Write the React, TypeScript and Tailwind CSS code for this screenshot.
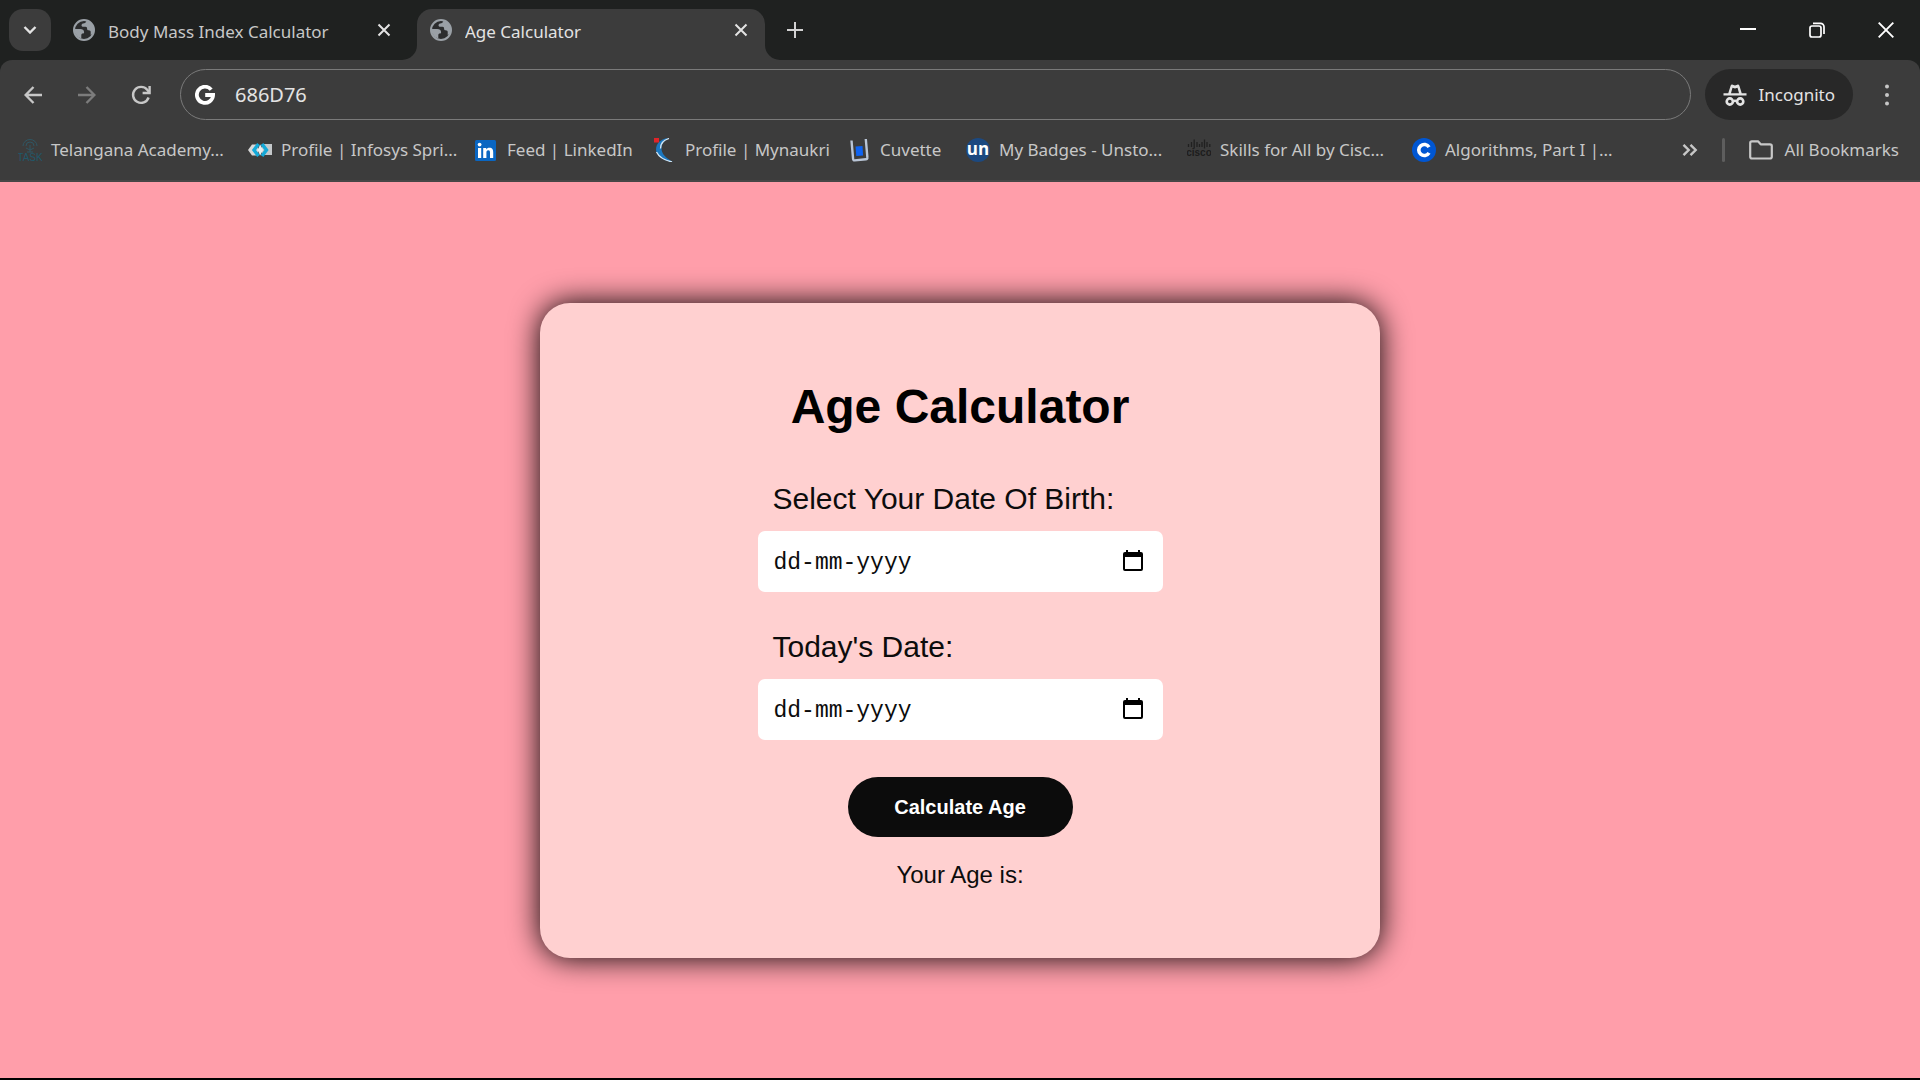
import React, { useState } from "react";

const Globe = () => (
  <svg viewBox="0 0 22 22" className="size-[22px] shrink-0" aria-hidden="true">
    <circle cx="11" cy="11" r="10" fill="#2b2c2d" stroke="#9aa0a6" strokeWidth="2" />
    <path
      d="M13.500 1.500c-.2 1.600-1 2.500-2.300 2.700-1.500.2-2.700.7-2.700 2 0 1.100.8 1.600 2 1.600h2c1.300 0 1.600.9 1.600 2 0 1 .6 1.500 1.600 1.500 1.400 0 2 .7 2 1.800v2.900l2.300-1.500 1-3.500-.8-4.500-3-3.500z"
      fill="#9aa0a6"
    />
    <path
      d="M1.500 10h5.700c2.300 0 3.900 1.200 3.900 3.200 0 .9-.5 1.300-1.300 1.300-1 0-1.500.6-1.500 1.500v3.600l-3.500-1.600-2.800-4z"
      fill="#9aa0a6"
    />
  </svg>
);

const Cross = () => (
  <svg viewBox="0 0 14 14" className="size-3.5" fill="none" stroke="#e3e3e3" strokeWidth="2" aria-hidden="true">
    <path d="M1.500 1.500l11 11M12.500 1.500l-11 11" />
  </svg>
);

const TaskIcon = () => (
  <svg viewBox="0 0 24 24" className="size-6 shrink-0" aria-hidden="true">
    <g fill="none" stroke="#2f5663" strokeWidth="1">
      <path d="M5 8a7 6.500 0 0 1 14 0M8 8a4 4 0 0 1 8 0M12 7v7M8 10l4 2 4-2M9 14h6" />
    </g>
    <text x="12" y="23" textAnchor="middle" fontSize="10" fill="#22586a" fontFamily="Liberation Sans, sans-serif">TASK</text>
  </svg>
);

const InfosysIcon = () => (
  <svg viewBox="0 0 24 24" className="size-6 shrink-0" aria-hidden="true">
    <rect x="14" y="6" width="10" height="11" fill="#c4c8ca" />
    <path d="M0 12l4-5.500h6v11H4z" fill="#d8d8d8" />
    <path d="M10.500 6L6 12l4.500 6M14 6l4.500 6-4.500 6" fill="none" stroke="#14a9d8" strokeWidth="3.400" />
    <path d="M12.200 6.500L15 12l-2.800 5.500L9.500 12z" fill="#e8eef0" />
  </svg>
);

const LinkedInIcon = () => (
  <svg viewBox="0 0 24 24" className="size-6 shrink-0" aria-hidden="true">
    <rect x="1" y="2" width="21" height="21" rx="1.500" fill="#0a66c2" />
    <circle cx="5.600" cy="6.600" r="1.900" fill="#fff" />
    <path d="M4 10h3.200v10H4zM9.200 10h3v1.400c.6-1 1.700-1.700 3.200-1.700 3 0 3.800 1.900 3.800 4.600V20H16v-5.100c0-1.300-.1-2.600-1.700-2.600s-1.900 1.200-1.900 2.500V20H9.200z" fill="#fff" />
  </svg>
);

const NaukriIcon = () => (
  <svg viewBox="0 0 24 24" className="size-6 shrink-0" aria-hidden="true">
    <path d="M16 0C8 1 4 6 4 11.500 4 17 10 22.500 21 24 14 20 9.500 16 9.500 10.500 9.500 6 12 2.500 16 0z" fill="#1b78c0" />
    <path d="M17 .5C10 2.500 8.500 7 8.500 10.500M4.500 14C7 19 13 22.500 20 23.800" fill="none" stroke="#d5e6f3" strokeWidth="1.300" />
    <path d="M2 0h5v4.500H2z" fill="#e02428" />
  </svg>
);

const CuvetteIcon = () => (
  <svg viewBox="0 0 24 24" className="size-6 shrink-0" aria-hidden="true">
    <path d="M8.500 8.500l7-.5.6 9.500-6.800.5z" fill="#0d63f3" />
    <path d="M4.500 2.500l1.600 18.500c.1 1 .6 1.500 1.600 1.400L19 21.300c1 0 1.500-.7 1.400-1.600L18.800 1" fill="none" stroke="#b9c5d6" strokeWidth="2.400" />
  </svg>
);

const UnstopIcon = () => (
  <svg viewBox="0 0 24 24" className="size-6 shrink-0" aria-hidden="true">
    <circle cx="12" cy="12" r="12" fill="#1c4980" />
    <text x="12" y="17" textAnchor="middle" fontSize="17" fontWeight="700" fill="#fff" fontFamily="Open Sans, sans-serif">un</text>
  </svg>
);

const CiscoIcon = () => (
  <svg viewBox="0 0 24 24" className="size-6 shrink-0" aria-hidden="true">
    <path
      d="M1.500 6v3M4.500 4v5M7.200 1.500v9M10 4v5M12.500 6v3M15 4v5M17.500 1.500v9M20 4v5M22.800 6v3"
      stroke="#202020"
      strokeWidth="1.300"
    />
    <text x="12" y="18" textAnchor="middle" fontSize="10" fontWeight="700" fill="#1c1c1c" fontFamily="Liberation Sans, sans-serif">cisco</text>
  </svg>
);

const CourseraIcon = () => (
  <svg viewBox="0 0 24 24" className="size-6 shrink-0" aria-hidden="true">
    <circle cx="12" cy="12" r="12" fill="#0056d2" />
    <path d="M17 9.200A5.500 5.500 0 1 0 17 14.800" fill="none" stroke="#fff" strokeWidth="3.600" />
  </svg>
);

const bookmarks = [
  { title: "Telangana Academy...", Icon: TaskIcon },
  { title: "Profile | Infosys Spri...", Icon: InfosysIcon },
  { title: "Feed | LinkedIn", Icon: LinkedInIcon },
  { title: "Profile | Mynaukri", Icon: NaukriIcon },
  { title: "Cuvette", Icon: CuvetteIcon },
  { title: "My Badges - Unsto...", Icon: UnstopIcon },
  { title: "Skills for All by Cisc...", Icon: CiscoIcon },
  { title: "Algorithms, Part I |...", Icon: CourseraIcon },
];

function TabStrip() {
  return (
    <div className="flex h-[60px] items-start bg-[#1f2120] pl-[9px] pt-[9px]">
      <button aria-label="Search tabs" className="flex size-[42px] items-center justify-center rounded-[14px] bg-[#3c3c3c]">
        <svg viewBox="0 0 14 8" className="h-2 w-3.5" fill="none" stroke="#e3e3e3" strokeWidth="2.400" aria-hidden="true">
          <path d="M1.500 1l5.500 5.500L12.500 1" />
        </svg>
      </button>
      <div className="ml-[22px] flex h-[42px] w-[318px] items-center">
        <Globe />
        <span className="ml-[13px] flex-1 truncate pt-1 text-[17px] text-[#c7c7c7]">Body Mass Index Calculator</span>
        <button aria-label="Close Body Mass Index Calculator"><Cross /></button>
      </div>
      <div className="ml-[11px] flex h-[51px] items-end">
        <div className="size-[15px] bg-[#3c3c3c]"><div className="size-full rounded-br-[15px] bg-[#1f2120]" /></div>
        <div className="flex h-[51px] w-[348px] items-start rounded-t-[15px] bg-[#3c3c3c] pl-[13px] pr-[17px]">
          <div className="flex h-[42px] flex-1 items-center">
            <Globe />
            <span className="ml-[13px] flex-1 truncate pt-1 text-[17px] text-[#e3e3e3]">Age Calculator</span>
            <button aria-label="Close Age Calculator"><Cross /></button>
          </div>
        </div>
        <div className="size-[15px] bg-[#3c3c3c]"><div className="size-full rounded-bl-[15px] bg-[#1f2120]" /></div>
      </div>
      <button aria-label="New tab" className="ml-[7px] flex h-[42px] items-center">
        <svg viewBox="0 0 16 16" className="size-4" stroke="#d2d2d2" strokeWidth="2" aria-hidden="true">
          <path d="M8 0v16M0 8h16" />
        </svg>
      </button>
      <div className="ml-auto mr-[26px] flex h-[42px] items-center gap-[53px]">
        <button aria-label="Minimize">
          <svg viewBox="0 0 16 16" className="size-4" stroke="#fff" strokeWidth="2" aria-hidden="true"><path d="M0 7h16" /></svg>
        </button>
        <button aria-label="Restore">
          <svg viewBox="0 0 16 16" className="size-4" fill="none" stroke="#fff" strokeWidth="1.700" aria-hidden="true">
            <rect x="1" y="4" width="11" height="11" rx="2" />
            <path d="M4 1.300h7.500a3.500 3.500 0 0 1 3.500 3.500V12" />
          </svg>
        </button>
        <button aria-label="Close">
          <svg viewBox="0 0 16 16" className="size-4" stroke="#fff" strokeWidth="1.900" aria-hidden="true"><path d="M.7.700l14.600 14.600M15.300.700L.7 15.300" /></svg>
        </button>
      </div>
    </div>
  );
}

function Toolbar() {
  const [url, setUrl] = useState("686D76");
  return (
    <div className="flex h-[51px] items-center pl-6 pr-[31px]">
      <button aria-label="Back">
        <svg viewBox="0 0 18 18" className="size-[18px]" fill="none" stroke="#c7c7c7" strokeWidth="2.400" aria-hidden="true">
          <path d="M18 9H2M9.500 1L1.600 9l7.900 8" />
        </svg>
      </button>
      <button aria-label="Forward" className="ml-9">
        <svg viewBox="0 0 18 18" className="size-[18px]" fill="none" stroke="#7c7c7c" strokeWidth="2.400" aria-hidden="true">
          <path d="M0 9h16M8.500 1l7.900 8-7.900 8" />
        </svg>
      </button>
      <button aria-label="Reload" className="ml-[35px]">
        <svg viewBox="0 0 20 20" className="size-5" fill="none" stroke="#c7c7c7" strokeWidth="2.400" aria-hidden="true">
          <path d="M17.600 12.500A8 8 0 1 1 16.200 4.700L18 7" />
          <path d="M18.600 1v7h-7" />
        </svg>
      </button>
      <div className="ml-[29px] flex h-[51px] flex-1 items-center rounded-full border border-[#7a7a7a] pl-3.5 pr-6">
        <svg viewBox="0 0 20 20" className="size-5 shrink-0" fill="none" stroke="#fff" strokeWidth="3.800" aria-hidden="true">
          <path d="M16.200 4.600A8.100 8.100 0 1 0 18.100 10H10.200" />
        </svg>
        <input
          aria-label="Address and search bar"
          value={url}
          onChange={(e) => setUrl(e.target.value)}
          className="ml-5 min-w-0 flex-1 bg-transparent text-xl text-[#e3e3e3] outline-none"
        />
      </div>
      <button className="ml-3.5 flex h-[51px] items-center rounded-full bg-[#282828] pl-[18px] pr-[18px] text-[17px] text-[#e3e3e3]">
        <svg viewBox="0 0 24 24" className="mr-3 size-6" aria-hidden="true">
          <path
            d="M.5 10.200h23v2.400H.5zM5.200 10.500L7.600 2.700c.3-1 1.200-1.400 2.100-1l2.300.9 2.300-.9c.9-.4 1.800 0 2.100 1l2.400 7.800h-2.700L14.500 4.700 12 5.600l-2.500-.9-1.600 5.800z"
            fill="#e3e3e3"
          />
          <g fill="none" stroke="#e3e3e3" strokeWidth="2.600">
            <circle cx="6.800" cy="18.500" r="3.100" />
            <circle cx="17.200" cy="18.500" r="3.100" />
            <path d="M9.900 18.300c1.200-.6 3-.6 4.200 0" />
          </g>
        </svg>
        Incognito
      </button>
      <button aria-label="Menu" className="ml-8">
        <svg viewBox="0 0 4 22" className="h-[22px] w-1" fill="#c7c7c7" aria-hidden="true">
          <circle cx="2" cy="2.500" r="2" />
          <circle cx="2" cy="11" r="2" />
          <circle cx="2" cy="19.500" r="2" />
        </svg>
      </button>
    </div>
  );
}

function BookmarksBar() {
  return (
    <nav aria-label="Bookmarks" className="flex h-[60px] items-center pl-[18px] pr-[21px] text-[17px] text-[#c7c7c7]">
      <div className="grid flex-1 grid-cols-[230px_226px_178px_195px_119px_221px_225px_1fr] items-center">
        {bookmarks.map(({ title, Icon }) => (
          <a key={title} href="#" className="flex items-center gap-[9px] whitespace-nowrap">
            <Icon />
            {title}
          </a>
        ))}
      </div>
      <button aria-label="More bookmarks">
        <svg viewBox="0 0 16 12" className="h-3 w-4" fill="none" stroke="#c7c7c7" strokeWidth="2.400" aria-hidden="true">
          <path d="M1.500.800L6.700 6 1.500 11.200M8.500.800L13.700 6 8.500 11.200" />
        </svg>
      </button>
      <div className="ml-6 h-6 w-[3px] rounded-full bg-[#5e5e5e]" />
      <a href="#" className="ml-6 flex items-center gap-3 whitespace-nowrap">
        <svg viewBox="0 0 24 20" className="h-5 w-6" fill="none" stroke="#c7c7c7" strokeWidth="2.200" strokeLinejoin="round" aria-hidden="true">
          <path d="M1.200 3c0-1 .7-1.700 1.700-1.700H9l2.700 3H21c1 0 1.800.8 1.800 1.700v10.800c0 1-.8 1.700-1.800 1.700H3c-1 0-1.800-.7-1.800-1.700z" />
        </svg>
        All Bookmarks
      </a>
    </nav>
  );
}

function DateField({ id, label }: { id: string; label: string }) {
  return (
    <div className="w-[405px] max-w-full">
      <label htmlFor={id} className="block pl-[15px] text-[30px] leading-9">{label}</label>
      <div className="mt-3.5 flex h-[61px] items-center rounded-[7px] bg-white pl-4 pr-5">
        <input
          id={id}
          placeholder="dd-mm-yyyy"
          className="min-w-0 flex-1 bg-transparent pt-1 font-['Liberation_Mono',monospace] text-[23px] outline-none placeholder:text-[#0c0c0c]"
        />
        <button type="button" aria-label={"Open calendar for " + label}>
          <svg viewBox="0 0 20 22" className="h-[22px] w-5" aria-hidden="true">
            <path d="M3 0h2v2h10V0h2v2h1a2 2 0 0 1 2 2v15a2 2 0 0 1-2 2H2a2 2 0 0 1-2-2V4a2 2 0 0 1 2-2h1zM2 7v12h16V7z" fill="#000" fillRule="evenodd" />
          </svg>
        </button>
      </div>
    </div>
  );
}

export default function App() {
  return (
    <div className="flex min-h-screen flex-col border-b-2 border-black bg-[#ff9eaa]">
      <header className="bg-[#1f2120] font-['Noto_Sans',sans-serif]">
        <TabStrip />
        <div className="rounded-t-xl border-b-2 border-[#474747] bg-[#3c3c3c] pt-[9px]">
          <Toolbar />
          <BookmarksBar />
        </div>
      </header>
      <main className="flex flex-1 items-center justify-center font-['Liberation_Sans',Arial,sans-serif] text-[#0c0c0c]">
        <form
          onSubmit={(e) => e.preventDefault()}
          className="flex w-[840px] max-w-full flex-col items-center rounded-[30px] bg-[#ffd0d0] pb-[69px] pt-[76px] shadow-[0_0_30px_#000]"
        >
          <h1 className="text-5xl leading-14 font-bold text-black">Age Calculator</h1>
          <div className="mt-[46px] flex flex-col gap-[37px]">
            <DateField id="birth" label="Select Your Date Of Birth:" />
            <DateField id="today" label="Today's Date:" />
          </div>
          <button type="submit" className="mt-[37px] h-[60px] w-[225px] rounded-full bg-[#0c0c0c] text-xl font-bold text-white">
            Calculate Age
          </button>
          <p className="mt-6 text-2xl leading-7">Your Age is:</p>
        </form>
      </main>
    </div>
  );
}
